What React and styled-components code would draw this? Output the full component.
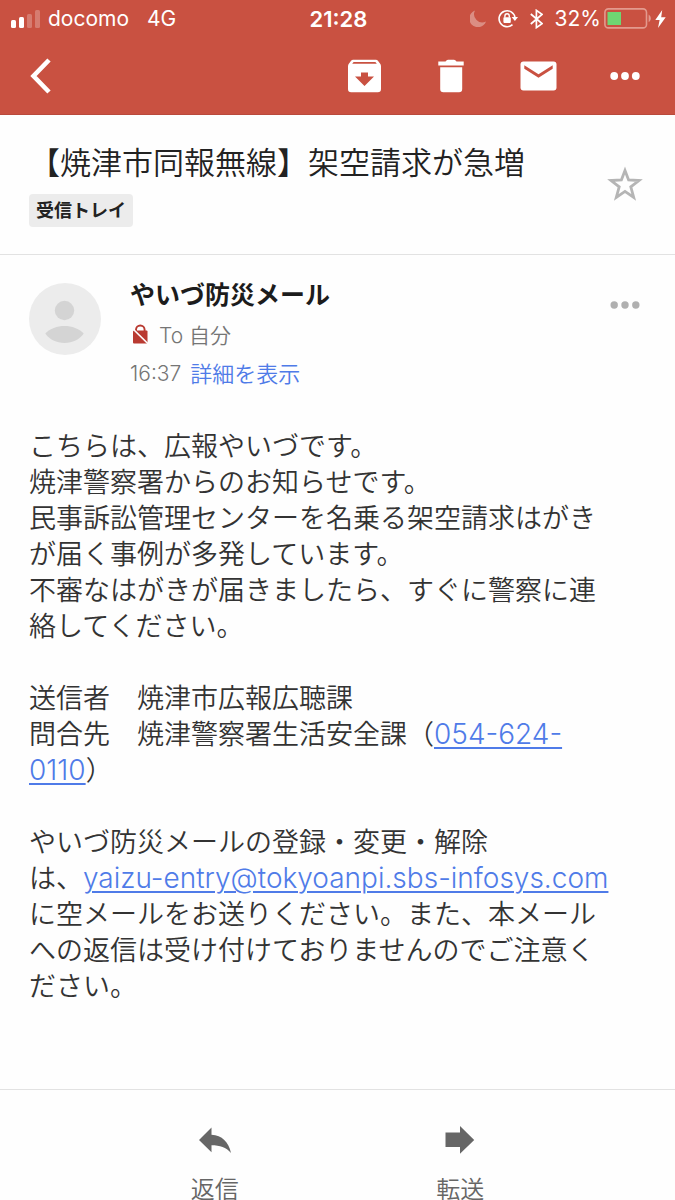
import React, { useState } from 'react';
import styled, { createGlobalStyle } from 'styled-components'

const GlobalStyle = createGlobalStyle`
  * {
    box-sizing: border-box;
  }

  body {
    margin: 0;
    background-color: #fefefe;
    color: #333;
    font-family: Inter, "Noto Sans CJK JP", sans-serif;
    font-weight: 350;
  }

  svg {
    display: block;
    flex: none;
  }
`

const Header = styled.header`
  background-color: #c95141;
  border-bottom: 1px solid #b94a3c;
  color: white;
`

const StatusBar = styled.div`
  display: grid;
  grid-template-columns: 1fr auto 1fr;
  align-items: center;
  height: 37px;
  padding: 0 9px 0 11px;
  font-size: 21px;
  font-weight: 400;
`

const Carrier = styled.div`
  display: flex;
  align-items: center;
  gap: 7px;
`

const Network = styled.span`
  margin-left: 11px;
`

const Clock = styled.time`
  font-size: 22px;
  font-weight: 600;
`

const Indicators = styled.div`
  display: flex;
  align-items: center;
  justify-content: flex-end;
  gap: 12px;
`

const Battery = styled.div`
  display: flex;
  align-items: center;
  gap: 3px;
`

const Toolbar = styled.nav`
  display: flex;
  align-items: center;
  justify-content: space-between;
  height: 77px;
  padding: 0 26px 0 17px;
`

const Actions = styled.div`
  display: flex;
  gap: 39px;
`

const IconButton = styled.button`
  display: flex;
  align-items: center;
  justify-content: center;
  width: 48px;
  height: 48px;
  padding: 0;
  border: none;
  background: none;
  color: ${props => props.$color || 'white'};
  cursor: pointer;
`

const MenuButton = styled(IconButton)`
  margin-top: 6px;
`

const Subject = styled.section`
  display: flex;
  align-items: center;
  justify-content: space-between;
  padding: 26px 26px 27px 29px;
  border-bottom: 1px solid #e2e2e2;
`

const Title = styled.h1`
  margin: 0 0 9px;
  color: #222;
  font-size: 31px;
  font-weight: 350;
  line-height: 44px;
`

const Label = styled.span`
  display: inline-block;
  padding: 1px 7px 0;
  border-radius: 4px;
  background-color: #ececec;
  color: #222;
  font-size: 18px;
  font-weight: 600;
  line-height: 32px;
  vertical-align: top;
`

const Sender = styled.section`
  display: flex;
  align-items: flex-start;
  padding: 20px 26px 0 29px;
`

const Avatar = styled.div`
  margin: 8px 29px 0 0;
`

const Info = styled.div`
  flex: 1;
  color: #757575;
  font-size: 21px;
  line-height: 38px;
`

const Name = styled.h2`
  margin: 0 0 2px;
  color: #1c1c1c;
  font-size: 25px;
  font-weight: 600;
  line-height: 40px;
`

const InfoRow = styled.div`
  display: flex;
  align-items: center;
  gap: 9px;
`

const DetailLink = styled.a`
  color: #4f7be8;
  font-size: 22px;
  text-decoration: none;
`

const Body = styled.article`
  padding: 36px 60px 84px 29px;
  font-size: 27px;
  line-height: 36px;
`

const Paragraph = styled.p`
  margin: 0 0 36px;

  &:last-child {
    margin-bottom: 0;
  }
`

const Link = styled.a`
  color: #4f7be8;
  font-size: 28px;
  line-height: 1;
  text-decoration: underline;
  text-decoration-thickness: 2px;
  text-underline-offset: 3px;
`

const Footer = styled.footer`
  display: flex;
  padding: 30px 92px 24px;
  border-top: 1px solid #e2e2e2;
`

const FooterButton = styled.button`
  flex: 1;
  display: flex;
  flex-direction: column;
  align-items: center;
  gap: 12px;
  padding: 0;
  border: none;
  background: none;
  color: #666;
  font-family: inherit;
  font-size: 24px;
  font-weight: 350;
  line-height: 36px;
  cursor: pointer;
`

const SignalIcon = () => (
  <svg width="30" height="20" viewBox="0 0 30 20" fill="white">
    <rect x="0" y="11" width="5" height="8" rx="1.5" />
    <rect x="8" y="8" width="5" height="11" rx="1.5" />
    <rect x="16" y="5" width="5" height="14" rx="1.5" opacity="0.25" />
    <rect x="24" y="1" width="5" height="18" rx="1.5" opacity="0.25" />
  </svg>
)

const MoonIcon = () => (
  <svg width="16" height="17" viewBox="0 0 16 17" fill="white" opacity="0.35">
    <path d="M5 0.5A8.6 8.6 0 1 0 16 11.5A8.2 8.2 0 0 1 5 0.5Z" />
  </svg>
)

const RotationLockIcon = () => (
  <svg width="20" height="19" viewBox="0 0 20 19" fill="none" stroke="white">
    <path d="M14.5 15.6A8 8 0 1 1 17 8.6" strokeWidth="1.6" />
    <path d="M13.6 8H20L16.9 12Z" fill="white" stroke="none" />
    <rect x="5.4" y="8.3" width="7.4" height="5.6" rx="0.8" fill="white" stroke="none" />
    <path d="M6.9 8.6V6.9a2.2 2.2 0 0 1 4.4 0V8.6" strokeWidth="1.4" />
  </svg>
)

const BluetoothIcon = () => (
  <svg width="13" height="20" viewBox="0 0 13 20" fill="none" stroke="white" strokeWidth="1.7">
    <path d="M0.8 5L12 14.6L6.4 18.6V1.4L12 5.4L0.8 15" />
  </svg>
)

const BatteryIcon = () => (
  <svg width="48" height="21" viewBox="0 0 48 21">
    <rect x="0.9" y="0.9" width="41.6" height="19" rx="3.5" fill="none" stroke="#e39a8e" strokeWidth="1.6" />
    <rect x="3.5" y="4" width="13.5" height="13" fill="#6fd672" />
    <path d="M44.6 6.6a4.4 4.4 0 0 1 0 7.6Z" fill="#e39a8e" />
  </svg>
)

const BoltIcon = () => (
  <svg width="11" height="18" viewBox="0 0 11 18" fill="white">
    <path d="M7.2 0L0.3 10H4.6L3 18L10.7 7.2H6.2Z" />
  </svg>
)

const BackIcon = () => (
  <svg width="24" height="36" viewBox="0 0 24 36" fill="none" stroke="white" strokeWidth="4.6">
    <path d="M20 2L4.500 18L20 34" />
  </svg>
)

const ArchiveIcon = () => (
  <svg width="33" height="34" viewBox="0 0 33 34" fill="white">
    <path
      fillRule="evenodd"
      d="M5 0.8H28Q29 0.8 29.7 1.6L32 4.5Q33 5.8 33 7.2V30Q33 33.2 29.8 33.2H3.2Q0 33.2 0 30V7.2Q0 5.8 1 4.5L3.3 1.6Q4 0.8 5 0.8ZM5.6 2.9L4.2 4.8H28.8L27.4 2.9ZM13 13.5V17.5H7L16.5 27L26 17.5H20V13.5Z"
    />
  </svg>
)

const TrashIcon = () => (
  <svg width="26" height="34" viewBox="0 0 26 34" fill="white">
    <path d="M0.3 2.6H7.5Q8.6 0.8 10 0.8H16Q17.4 0.8 18.5 2.6H25.7V6.6H0.3Z" />
    <path d="M2.2 8.2H24.2V30Q24.2 33.2 21 33.2H5.4Q2.2 33.2 2.2 30Z" />
  </svg>
)

const MailIcon = () => (
  <svg width="37" height="30" viewBox="0 0 37 30">
    <rect x="0.5" y="0.5" width="36" height="29" rx="3" fill="white" />
    <path d="M4.3 4.3L18.5 13.2L32.7 4.3V7.8L18.5 16.8L4.3 7.8Z" fill="#c95141" />
  </svg>
)

const DotsIcon = ({ r }) => (
  <svg width="30" height="10" viewBox="0 0 30 10" fill="currentColor">
    <circle cx="4.2" cy="5" r={r} />
    <circle cx="15" cy="5" r={r} />
    <circle cx="25.8" cy="5" r={r} />
  </svg>
)

const StarIcon = ({ filled }) => (
  <svg width="36" height="36" viewBox="0 0 36 36" stroke="currentColor" strokeWidth="2.8">
    <path
      fill={filled ? 'currentColor' : 'none'}
      d="M18 4.4L21.6 14L32 14.5L23.8 20.9L26.7 31.4L18 25.4L9.3 31.4L12.2 20.9L4 14.5L14.4 14Z"
    />
  </svg>
)

const PersonIcon = () => (
  <svg width="72" height="72" viewBox="0 0 72 72">
    <circle cx="36" cy="36" r="36" fill="#ececec" />
    <circle cx="35.5" cy="27.5" r="9.7" fill="#d4d4d4" />
    <path d="M16.3 50.5C21 45.5 28 43 35.5 43S50 45.5 54.7 50.5C50.5 56.5 43.5 60 35.5 60S20.5 56.5 16.3 50.5Z" fill="#d4d4d4" />
  </svg>
)

const NoEncryptionIcon = () => (
  <svg width="20" height="24" viewBox="0 0 20 24">
    <path d="M6 7V5.8a4.3 4.3 0 0 1 8.6 0V7" fill="none" stroke="#b93a31" strokeWidth="1.9" />
    <rect x="3" y="6.5" width="14.5" height="13" rx="1" fill="#b93a31" />
    <path d="M1.5 3.5L18.8 20.5" stroke="#fefefe" strokeWidth="1.7" />
  </svg>
)

const ReplyIcon = () => (
  <svg width="34" height="40" viewBox="0 0 34 40" fill="currentColor">
    <path d="M1 20L13.5 7.5V14.7C24 15.5 30.5 21.5 33 33C28 27 22 25.2 13.5 25.2V32.3Z" />
  </svg>
)

const ForwardIcon = () => (
  <svg width="30" height="40" viewBox="0 0 30 40" fill="currentColor">
    <path d="M0.5 12.5H15V6L29.2 20L15 33.7V27H0.5Z" />
  </svg>
)

const App = () => {

const [starred, setStarred] = useState(false)

  return (
    <>
      <GlobalStyle />
      <Header>
        <StatusBar>
          <Carrier>
            <SignalIcon />
            <span>docomo</span>
            <Network>4G</Network>
          </Carrier>
          <Clock>21:28</Clock>
          <Indicators>
            <MoonIcon />
            <RotationLockIcon />
            <BluetoothIcon />
            <Battery>
              <span>32%</span>
              <BatteryIcon />
              <BoltIcon />
            </Battery>
          </Indicators>
        </StatusBar>
        <Toolbar>
          <IconButton aria-label="戻る"><BackIcon /></IconButton>
          <Actions>
            <IconButton aria-label="アーカイブ"><ArchiveIcon /></IconButton>
            <IconButton aria-label="削除"><TrashIcon /></IconButton>
            <IconButton aria-label="未読にする"><MailIcon /></IconButton>
            <IconButton aria-label="その他"><DotsIcon r={3.9} /></IconButton>
          </Actions>
        </Toolbar>
      </Header>

      <main lang="ja">
        <Subject>
          <div>
            <Title>【焼津市同報無線】架空請求が急増</Title>
            <Label>受信トレイ</Label>
          </div>
          <IconButton
            $color="#b5b5b5"
            aria-label="スター"
            aria-pressed={starred}
            onClick={() => setStarred(!starred)}
          >
            <StarIcon filled={starred} />
          </IconButton>
        </Subject>

        <Sender>
          <Avatar><PersonIcon /></Avatar>
          <Info>
            <Name>やいづ防災メール</Name>
            <InfoRow>
              <NoEncryptionIcon />
              <span>To 自分</span>
            </InfoRow>
            <InfoRow>
              <time>16:37</time>
              <DetailLink href="#details">詳細を表示</DetailLink>
            </InfoRow>
          </Info>
          <MenuButton $color="#b0b0b0" aria-label="メッセージのメニュー"><DotsIcon r={3.7} /></MenuButton>
        </Sender>

        <Body>
          <Paragraph>
            こちらは、広報やいづです。<br />
            焼津警察署からのお知らせです。<br />
            民事訴訟管理センターを名乗る架空請求はがきが届く事例が多発しています。<br />
            不審なはがきが届きましたら、すぐに警察に連絡してください。
          </Paragraph>
          <Paragraph>
            送信者　焼津市広報広聴課<br />
            問合先　焼津警察署生活安全課（<Link href="tel:054-624-0110">054-624-0110</Link>）
          </Paragraph>
          <Paragraph>
            やいづ防災メールの登録・変更・解除<br />
            は、<Link href="mailto:yaizu-entry@tokyoanpi.sbs-infosys.com">yaizu-entry@tokyoanpi.sbs-infosys.com</Link>に空メールをお送りください。また、本メールへの返信は受け付けておりませんのでご注意ください。
          </Paragraph>
        </Body>
      </main>

      <Footer lang="ja">
        <FooterButton>
          <ReplyIcon />
          返信
        </FooterButton>
        <FooterButton>
          <ForwardIcon />
          転送
        </FooterButton>
      </Footer>
    </>
  )
}

export default App
